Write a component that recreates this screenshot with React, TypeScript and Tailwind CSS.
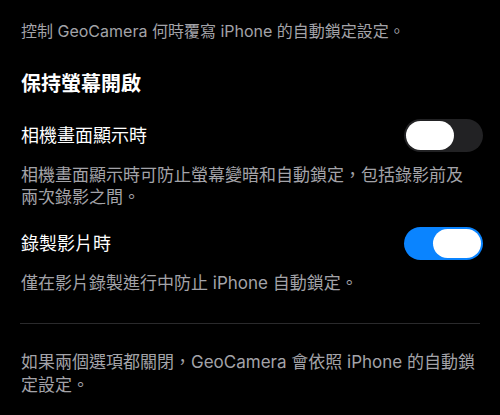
import React from "react";

const font = {
  fontFamily: 'Inter, "Noto Sans CJK TC", "Noto Sans CJK SC", sans-serif',
};

function Toggle({ on }: { on: boolean }) {
  return (
    <div
      className={`relative w-[79px] h-[33px] rounded-full shrink-0 ${
        on ? "bg-[#0a84ff]" : "bg-[#222224]"
      }`}
    >
      <div
        className={`absolute top-[2px] h-[29px] w-[48px] rounded-full bg-white ${
          on ? "right-[2px]" : "left-[2px]"
        }`}
      />
    </div>
  );
}

export default function App() {
  return (
    <div
      className="w-[500px] h-[415px] bg-black overflow-hidden pl-5 pr-[17px] pt-[20px]"
      style={font}
    >
      <p className="text-[16px] leading-[22px] text-[#a3a3a8] pl-px">
        控制 GeoCamera 何時覆寫 iPhone 的自動鎖定設定。
      </p>
      <h2 className="mt-[28px] text-[20px] leading-[28px] font-semibold text-white pl-px">
        保持螢幕開啟
      </h2>
      <div className="mt-[21px] flex items-center justify-between h-[33px]">
        <span className="text-[18px] leading-[24px] text-white pl-px">
          相機畫面顯示時
        </span>
        <Toggle on={false} />
      </div>
      <p className="mt-[12px] text-[17px] leading-[22px] text-[#a3a3a8] pl-px pr-[8px]">
        相機畫面顯示時可防止螢幕變暗和自動鎖定，包括錄影前及兩次錄影之間。
      </p>
      <div className="mt-[19px] flex items-center justify-between h-[33px]">
        <span className="text-[18px] leading-[24px] text-white pl-px">
          錄製影片時
        </span>
        <Toggle on={true} />
      </div>
      <p className="mt-[12px] text-[17px] leading-[22px] text-[#a3a3a8] pl-px">
        僅在影片錄製進行中防止 iPhone 自動鎖定。
      </p>
      <div className="mt-[29px] h-px bg-[#2a2a2c] mr-[3px]" />
      <p className="mt-[27px] text-[17px] leading-[23px] text-[#a3a3a8] pl-px whitespace-nowrap">
        如果兩個選項都關閉，GeoCamera 會依照 iPhone 的自動鎖
        <br />
        定設定。
      </p>
    </div>
  );
}
